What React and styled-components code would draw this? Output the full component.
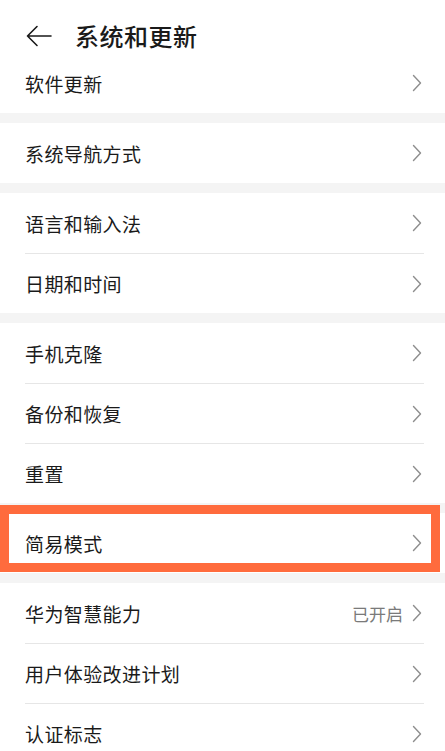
import React from 'react';
import styled, { createGlobalStyle } from 'styled-components';

const GlobalStyle = createGlobalStyle`
  html, body {
    margin: 0;
    padding: 0;
    background: #f4f4f4;
  }
  body {
    font-family: "Noto Sans CJK SC", "Noto Sans", sans-serif;
    -webkit-font-smoothing: antialiased;
  }
`;

const groups = [
  [{ label: '软件更新' }],
  [{ label: '系统导航方式' }],
  [{ label: '语言和输入法' }, { label: '日期和时间' }],
  [{ label: '手机克隆' }, { label: '备份和恢复' }, { label: '重置' }],
  [{ label: '简易模式', highlight: true }],
  [
    { label: '华为智慧能力', value: '已开启' },
    { label: '用户体验改进计划' },
    { label: '认证标志' },
  ],
];

const Chevron = () => (
  <svg width="10" height="18" viewBox="0 0 10 18" fill="none">
    <path d="M1.5 1.5 L8.5 9 L1.5 16.5" stroke="#8e8e8e" strokeWidth="1.4" strokeLinecap="round" strokeLinejoin="round" />
  </svg>
);

const BackArrow = () => (
  <svg width="26" height="22" viewBox="0 0 26 22" fill="none">
    <path d="M11 1.5 L1.5 11 L11 20.5 M1.5 11 H25" stroke="#1a1a1a" strokeWidth="1.6" strokeLinecap="round" strokeLinejoin="round" />
  </svg>
);

const App = () => (
  <>
    <GlobalStyle />
    <Page>
      <Header>
        <BackButton>
          <BackArrow />
        </BackButton>
        <Title>系统和更新</Title>
      </Header>
      {groups.map((items, gi) => (
        <Group key={gi}>
          {items.map((item, i) => (
            <Row key={item.label} $highlight={item.highlight}>
              <RowInner $first={i === 0}>
                <Label>{item.label}</Label>
                <Right>
                  {item.value && <Value>{item.value}</Value>}
                  <Chevron />
                </Right>
              </RowInner>
            </Row>
          ))}
        </Group>
      ))}
    </Page>
  </>
);

const Page = styled.div`
  width: 100%;
  min-height: 100vh;
  overflow: hidden;
`;

const Header = styled.div`
  height: 53px;
  background: #fff;
  display: flex;
  align-items: center;
  padding: 19px 0 0 26px;
  box-sizing: border-box;
`;

const BackButton = styled.div`
  width: 49px;
  display: flex;
  align-items: center;
`;

const Title = styled.h1`
  margin: 0;
  font-size: 24px;
  line-height: 34px;
  font-weight: 500;
  color: #1a1a1a;
  letter-spacing: 0.5px;
`;

const Group = styled.div`
  background: #fff;
  margin-bottom: 10px;
`;

const Row = styled.div`
  position: relative;
  padding: 0 21px 0 25px;

  ${({ $highlight }) =>
    $highlight &&
    `
    &::after {
      content: '';
      position: absolute;
      top: -8px;
      left: 0;
      right: 5px;
      bottom: 1px;
      border: 9px solid #ff6b3d;
      pointer-events: none;
    }
  `}
`;

const RowInner = styled.div`
  height: 60px;
  box-sizing: border-box;
  display: flex;
  align-items: center;
  justify-content: space-between;
  border-top: ${({ $first }) => ($first ? 'none' : '1px solid #e6e6e6')};
  padding-right: 2px;
`;

const Label = styled.span`
  font-size: 19px;
  color: #1a1a1a;
  letter-spacing: 0.4px;
`;

const Right = styled.div`
  display: flex;
  align-items: center;
  gap: 9px;
`;

const Value = styled.span`
  font-size: 17px;
  color: #7a7a7a;
`;

export default App;
